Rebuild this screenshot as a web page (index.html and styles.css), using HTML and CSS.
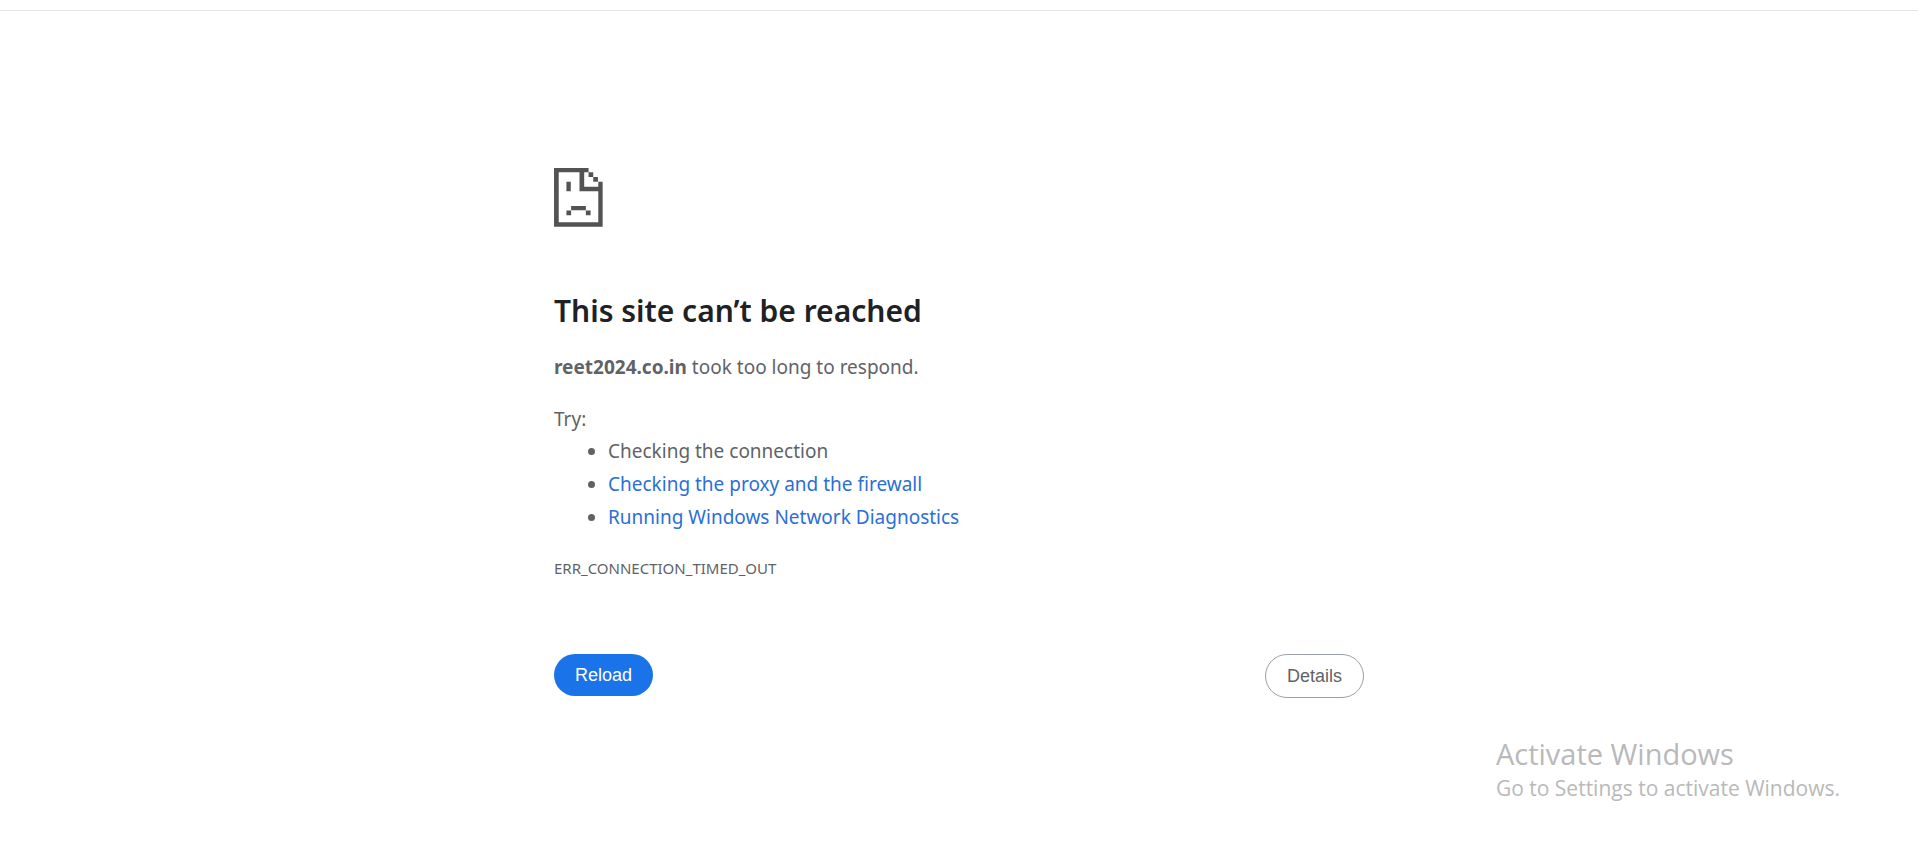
FILE: index.html
```
<!DOCTYPE html>
<html lang="en">
  <head>
    <meta charset="utf-8">
    <title>reet2024.co.in</title>
    <meta name="viewport" content="width=device-width, initial-scale=1">
    <link rel="stylesheet" href="styles.css">
  </head>
<body>
    <div class="toolbar-edge"></div>
    <main class="interstitial">
        <svg class="icon" viewBox="0 0 146 176" aria-hidden="true">
            <!-- page outline with folded corner -->
            <path d="M0 0H103V13H117V27H131V41H145V175H0ZM14 13V162H132V69H76V13ZM90 13V56H132V41H117V27H103V13Z" fill-rule="evenodd"/>
            <!-- eye and mouth -->
            <path d="M37 41H50V69H37ZM51 113H95V126H51ZM37 127H51V141H37ZM95 127H109V141H95Z"/>
        </svg>
        <h1>This site can’t be reached</h1>
        <p class="summary"><strong>reet2024.co.in</strong> took too long to respond.</p>
        <div class="suggestions">
            <p>Try:</p>
            <ul>
                <li>Checking the connection</li>
                <li><a href="#buttons">Checking the proxy and the firewall</a></li>
                <li><a href="#buttons">Running Windows Network Diagnostics</a></li>
            </ul>
        </div>
        <div class="error-code">ERR_CONNECTION_TIMED_OUT</div>
        <div class="buttons" id="buttons">
            <button type="button" class="reload">Reload</button>
            <button type="button" class="details">Details</button>
        </div>
    </main>
    <aside class="watermark">
        <p class="watermark-title">Activate Windows</p>
        <p>Go to Settings to activate Windows.</p>
    </aside>
</body>
</html>
```
FILE: styles.css
```
* {
    box-sizing: border-box;
    margin: 0;
    padding: 0;
}
body {
    min-height: 100vh;
    background: #fff;
    color: #5f6368;
    font: 19px/32px "Noto Sans", "Open Sans", sans-serif;
}
.toolbar-edge {
    height: 11px;
    border-bottom: 1px solid #e6e6e6;
}
.interstitial {
    max-width: 810px;
    margin: 0 auto;
    padding-top: 157px;
}
.icon {
    display: block;
    width: 49px;
    height: 59px;
    fill: #535353;
}
h1 {
    margin-top: 64px;
    color: #202124;
    font-size: 30px;
    font-weight: 600;
    line-height: 40px;
}
.summary {
    margin-top: 20px;
}
.suggestions {
    margin-top: 20px;
}
.suggestions ul {
    padding-left: 54px;
    line-height: 33px;
}
.suggestions a {
    color: #2b6fd6;
    text-decoration: none;
}
.error-code {
    margin-top: 18px;
    font-size: 15px;
}
.buttons {
    display: flex;
    justify-content: space-between;
    align-items: flex-start;
    margin-top: 70px;
}
button {
    min-width: 99px;
    padding: 0 20px;
    border: 0;
    border-radius: 22px;
    font: 18px/42px "Liberation Sans", Arial, sans-serif;
    cursor: pointer;
}
.reload {
    background: #1a73e8;
    color: #fff;
}
.details {
    border: 1px solid #9aa0a6;
    background: #fff;
    color: #5f6368;
}
/* sits over the page like the system overlay */
.watermark {
    position: absolute;
    right: 78px;
    bottom: 40px;
    color: #b9b9b9;
    font-family: "Open Sans", sans-serif;
    font-size: 21px;
}
.watermark-title {
    font-size: 29px;
    line-height: 36px;
}
```
